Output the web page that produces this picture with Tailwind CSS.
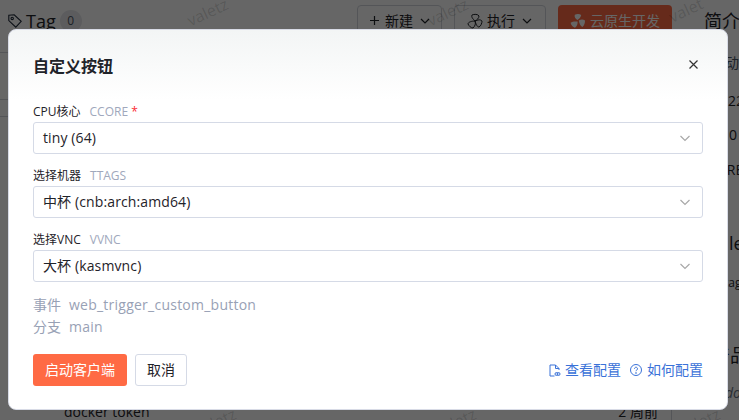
<!DOCTYPE html>
<html lang="zh-CN">
<head>
    <meta charset="UTF-8">
    <title>自定义按钮</title>
    <script src="https://cdn.jsdelivr.net/npm/@tailwindcss/browser@4"></script>
</head>
<body class="w-[739px] h-[420px] overflow-hidden bg-white text-[#1f2329] font-['Open_Sans','Noto_Sans_CJK_SC',sans-serif]">
<div class="relative w-[739px] h-[420px] overflow-hidden">

    <!-- page behind the dialog -->
    <div class="flex h-full">
        <div class="w-[690px] shrink-0 pr-[18px] flex flex-col">
            <div class="flex items-center h-[53px] pb-[11px] pl-[8px] border-b border-gray-300">
                <svg class="w-[14px] h-[14px] text-gray-800" viewBox="0 0 14 14" fill="none" stroke="currentColor" stroke-width="1.1"><path d="M.8 1.2l5.4-.4 7 6.6-5.4 5.8-7-6.6z"/><circle cx="4.2" cy="4.4" r="1.2"/></svg>
                <span class="ml-[4px] text-lg">Tag</span>
                <span class="ml-[4px] w-[22px] h-[22px] rounded-full bg-gray-200 flex items-center justify-center text-xs text-gray-600">0</span>
                <div class="ml-auto flex gap-3">
                    <div class="w-[85px] h-[32px] border border-gray-300 rounded flex items-center pl-[12px] text-sm">
                        <svg class="w-[9px] h-[9px]" viewBox="0 0 9 9" fill="none" stroke="currentColor" stroke-width="1.2"><path d="M4.5 0v9M0 4.5h9"/></svg>
                        <span class="ml-[6px]">新建</span>
                        <svg class="w-[10px] h-[10px] ml-[7px]" viewBox="0 0 10 10" fill="none" stroke="currentColor" stroke-width="1.2"><path d="M1 3l4 4 4-4"/></svg>
                    </div>
                    <div class="w-[92px] h-[32px] border border-gray-300 rounded flex items-center pl-[12px] text-sm">
                        <svg class="w-[16px] h-[16px]" viewBox="0 0 16 16" fill="none" stroke="currentColor" stroke-width="1"><path d="M8 8C6 6 4 4 5 2c2-1 6-1 7 1 0 2-2 4-4 5zM8 8c3-1 5-2 7 0 0 2-1 5-3 6-2 0-3-3-4-6zM8 8c1 3 0 5-2 7-2 0-4-2-5-4 0-2 4-3 7-3z"/></svg>
                        <span class="ml-[4px]">执行</span>
                        <svg class="w-[10px] h-[10px] ml-[7px]" viewBox="0 0 10 10" fill="none" stroke="currentColor" stroke-width="1.2"><path d="M1 3l4 4 4-4"/></svg>
                    </div>
                    <div class="w-[114px] h-[32px] bg-[#ff6a44] text-white rounded flex items-center pl-[12px] text-sm">
                        <svg class="w-[16px] h-[16px]" viewBox="0 0 16 16" fill="currentColor"><path d="M7.4 7C5.5 5.8 4 4 4.8 1.8 6.8.8 9.6.8 11.2 2 10.8 4.2 9.4 6 7.4 7zM8.8 7.4c2-.9 4.2-1.3 6.2.2.2 2.4-.8 5-2.6 6.4-2-1-3.2-3.8-3.6-6.6zM7.6 8.6c.2 2.4-.6 4.6-2.6 6.2-2-.6-4-2.6-4.4-5C2.400 8.400 5 8.200 7.600 8.600z"/></svg>
                        <span class="ml-[4px]">云原生开发</span>
                    </div>
                </div>
            </div>
            <div class="h-[47px] border-b border-gray-300"></div>
            <div class="h-[17px] border-b border-gray-300"></div>
            <div class="mt-auto flex justify-between pl-[64px] pr-[13px] text-sm h-[18px] leading-[20px] border-r border-gray-300">
                <span>docker token</span>
                <span>2 周前</span>
            </div>
        </div>
        <div class="flex-1 pl-[14px] whitespace-nowrap text-sm flex flex-col items-start">
            <div class="mt-[8px] text-lg h-[26px] leading-[26px]">简介</div>
            <div class="mt-[19px] h-[20px] leading-[20px] ml-[7px] text-gray-600">启动</div>
            <div class="mt-[18px] h-[20px] leading-[20px] ml-[8px]">2022</div>
            <div class="mt-[14px] h-[20px] leading-[20px] ml-[17px]">10 #</div>
            <div class="mt-[15px] h-[20px] leading-[20px] ml-[14px]">CRE</div>
            <div class="mt-[50px] h-[26px] leading-[26px] ml-[25px] text-lg">le</div>
            <div class="mt-[17px] h-[20px] leading-[20px] ml-[20px] text-xs">tag</div>
            <div class="mt-[49px] h-[26px] leading-[26px] ml-[8px] text-lg">产品</div>
            <div class="mt-[15px] h-[20px] leading-[20px] ml-[21px] italic text-gray-500">do</div>
        </div>
    </div>

    <!-- watermark -->
    <span class="absolute left-[186px] top-[0px] -rotate-[25deg] text-base text-black/15">valetz</span>
    <span class="absolute left-[426px] top-[0px] -rotate-[25deg] text-base text-black/15">valetz</span>
    <span class="absolute left-[668px] top-[-2px] -rotate-[25deg] text-base text-black/15">valet</span>
    <span class="absolute left-[194px] top-[410px] -rotate-[25deg] text-base text-black/15">valetz</span>
    <span class="absolute left-[434px] top-[410px] -rotate-[25deg] text-base text-black/15">valetz</span>
    <span class="absolute left-[678px] top-[410px] -rotate-[25deg] text-base text-black/15">valetz</span>

    <!-- overlay -->
    <div class="absolute inset-0 bg-black/60"></div>

    <!-- dialog -->
    <div class="absolute left-[8px] top-[29px] w-[720px] h-[381px] rounded-[8px] border border-[#d8dbe6] bg-linear-to-b from-[#f3f5f5] to-white to-[70px] px-[24px] pt-[24px] flex flex-col">
        <div class="flex items-center justify-between h-[24px]">
            <h2 class="text-base font-bold leading-6 text-[#1f2329]">自定义按钮</h2>
            <svg class="w-[9px] h-[9px] mr-[5px] mb-[4px] text-[#333]" viewBox="0 0 9 9" fill="none" stroke="currentColor" stroke-width="1.2"><path d="M.5.5l8 8M8.500.5l-8 8"/></svg>
        </div>

        <div class="mt-[25px] flex flex-col gap-[13px]">
            <div>
                <div class="h-[18px] text-xs leading-[18px] mb-[1px]">CPU核心<span class="ml-[9px] text-[#a0a8bc]">CCORE</span> <span class="text-red-500">*</span></div>
                <div class="h-[32px] border border-[#d5dae6] rounded-[3px] pl-[9px] pr-[11px] flex items-center justify-between text-sm tracking-[0.12px]">
                    <span>tiny (64)</span>
                    <svg class="w-[12px] h-[12px] text-[#a8a8a8]" viewBox="0 0 12 12" fill="none" stroke="currentColor" stroke-width="1.2"><path d="M1.5 4l4.5 4.500L10.500 4"/></svg>
                </div>
            </div>
            <div>
                <div class="h-[18px] text-xs leading-[18px] mb-[1px]">选择机器<span class="ml-[9px] text-[#a0a8bc]">TTAGS</span></div>
                <div class="h-[32px] border border-[#d5dae6] rounded-[3px] pl-[9px] pr-[11px] flex items-center justify-between text-sm tracking-[0.12px]">
                    <span>中杯 (cnb:arch:amd64)</span>
                    <svg class="w-[12px] h-[12px] text-[#a8a8a8]" viewBox="0 0 12 12" fill="none" stroke="currentColor" stroke-width="1.2"><path d="M1.5 4l4.5 4.500L10.500 4"/></svg>
                </div>
            </div>
            <div>
                <div class="h-[18px] text-xs leading-[18px] mb-[1px]">选择VNC<span class="ml-[9px] text-[#a0a8bc]">VVNC</span></div>
                <div class="h-[32px] border border-[#d5dae6] rounded-[3px] pl-[9px] pr-[11px] flex items-center justify-between text-sm tracking-[0.12px]">
                    <span>大杯 (kasmvnc)</span>
                    <svg class="w-[12px] h-[12px] text-[#a8a8a8]" viewBox="0 0 12 12" fill="none" stroke="currentColor" stroke-width="1.2"><path d="M1.5 4l4.500 4.500L10.500 4"/></svg>
                </div>
            </div>
        </div>

        <div class="mt-[12px] text-sm leading-[22px] text-[#98a1b5]">
            <div><span class="mr-2">事件</span><span class="tracking-[0.24px]">web_trigger_custom_button</span></div>
            <div><span class="mr-2">分支</span><span class="tracking-[0.24px]">main</span></div>
        </div>

        <div class="mt-[16px] flex items-center gap-2 text-sm">
            <button class="w-[94px] h-[32px] rounded-[3px] bg-[#ff6a44] text-white">启动客户端</button>
            <button class="w-[52px] h-[32px] rounded-[3px] border border-[#d5dae6] text-[#1f2329]">取消</button>
            <div class="ml-auto flex items-center text-[#3a72d8]">
                <svg class="w-[12px] h-[13px] mr-[4px]" viewBox="0 0 12 13" fill="none" stroke="currentColor" stroke-width="1"><path d="M5.500 12H1V1h5.500L10 4.500V6M6.500 1v3.500H10"/><circle cx="7.500" cy="10" r="1.500"/><circle cx="9.500" cy="10" r="1.500"/></svg>
                <span>查看配置</span>
                <svg class="w-[12px] h-[12px] ml-[9px] mr-[5px]" viewBox="0 0 12 12" fill="none" stroke="currentColor" stroke-width="1"><circle cx="6" cy="6" r="5.500"/><path d="M4.500 4.700a1.500 1.500 0 1 1 2.300 1.300c-.5.3-.8.6-.8 1.200"/><circle cx="6" cy="9" r=".4"/></svg>
                <span>如何配置</span>
            </div>
        </div>
    </div>
</div>
</body>
</html>
